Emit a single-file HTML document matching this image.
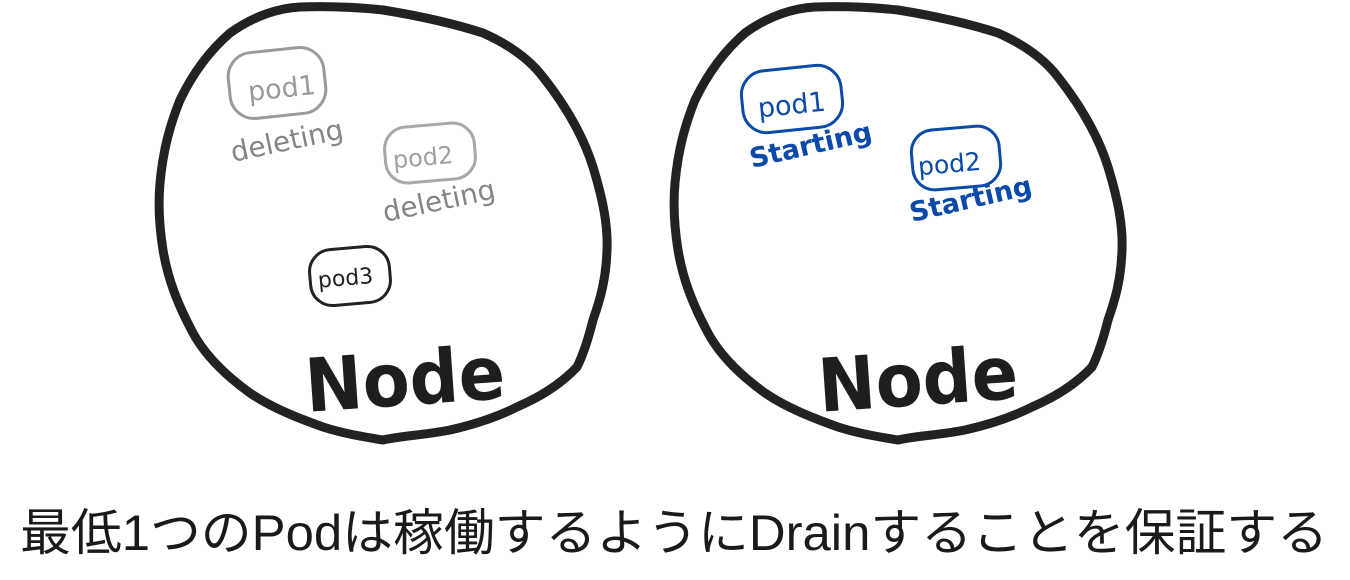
<!DOCTYPE html>
<html><head><meta charset="utf-8"><style>
html,body{margin:0;padding:0;background:#fff;width:1350px;height:580px;overflow:hidden}
svg{display:block}
.h{font-family:"DejaVu Sans","Liberation Sans",sans-serif}
</style></head><body>
<svg width="1350" height="580" viewBox="0 0 1350 580" xmlns="http://www.w3.org/2000/svg">
<defs>
<path id="blob" d="M230,33 C255,15 280,8 300,7 C330,6 355,7 383,10 C420,16 455,24 483,33 C510,45 530,60 543,77 C565,105 583,135 593,167 C603,200 608,225 607,250 C606,280 600,300 593,320 C588,340 583,355 577,367 C560,385 540,397 517,407 C495,418 472,425 450,430 C425,435 400,436 383,440 C365,437 345,434 323,427 C298,418 272,408 250,393 C225,375 205,355 193,333 C178,305 168,280 163,250 C159,225 158,205 160,183 C163,150 170,125 180,100 C192,75 208,52 230,33 Z" fill="none" stroke="#222" stroke-width="9" stroke-linejoin="round"/>
</defs>
<use href="#blob"/>
<use href="#blob" transform="translate(515,0)"/>

<rect x="229" y="50" width="96" height="66" rx="24" fill="none" stroke="#9a9a9a" stroke-width="3" transform="rotate(-6 277 83)"/>
<text class="h" x="248" y="98" font-size="27" fill="#9a9a9a" transform="rotate(-6 277 90)">pod1</text>
<text class="h" x="233" y="162" font-size="28" fill="#858585" transform="rotate(-12 233 162)">deleting</text>
<rect x="385" y="125" width="90" height="56" rx="22" fill="none" stroke="#a8a8a8" stroke-width="3" transform="rotate(-5 430 153)"/>
<text class="h" x="393" y="165" font-size="24" fill="#a0a0a0" transform="rotate(-5 430 160)">pod2</text>
<text class="h" x="385" y="222" font-size="28" fill="#858585" transform="rotate(-12 385 222)">deleting</text>
<rect x="310" y="248" width="80" height="56" rx="22" fill="none" stroke="#222" stroke-width="3" transform="rotate(-5 350 276)"/>
<text class="h" x="318" y="285" font-size="22" fill="#222" transform="rotate(-5 350 280)">pod3</text>
<text class="h" x="305" y="405" font-size="74" font-weight="bold" fill="#1e1e1e" textLength="200" lengthAdjust="spacingAndGlyphs" transform="rotate(-4 405 380)">Node</text>

<rect x="742" y="68" width="100" height="62" rx="24" fill="none" stroke="#0b4aa8" stroke-width="3" transform="rotate(-6 792 99)"/>
<text class="h" x="758" y="114" font-size="27" fill="#0b4aa8" transform="rotate(-6 792 108)">pod1</text>
<text class="h" x="752" y="168" font-size="27" font-weight="bold" fill="#0b4aa8" transform="rotate(-13 752 168)">Starting</text>
<rect x="912" y="128" width="88" height="60" rx="22" fill="none" stroke="#0b4aa8" stroke-width="3" transform="rotate(-5 956 158)"/>
<text class="h" x="918" y="172" font-size="25" fill="#0b4aa8" transform="rotate(-5 956 165)">pod2</text>
<text class="h" x="912" y="222" font-size="27" font-weight="bold" fill="#0b4aa8" transform="rotate(-13 912 222)">Starting</text>
<text class="h" x="818" y="405" font-size="74" font-weight="bold" fill="#1e1e1e" textLength="200" lengthAdjust="spacingAndGlyphs" transform="rotate(-4 918 380)">Node</text>

<text x="20" y="550" font-size="50" fill="#1a1a1a" textLength="1308" lengthAdjust="spacingAndGlyphs" style='font-family:"Liberation Sans","Noto Sans CJK JP",sans-serif'>最低1つのPodは稼働するようにDrainすることを保証する</text>
</svg>
</body></html>
